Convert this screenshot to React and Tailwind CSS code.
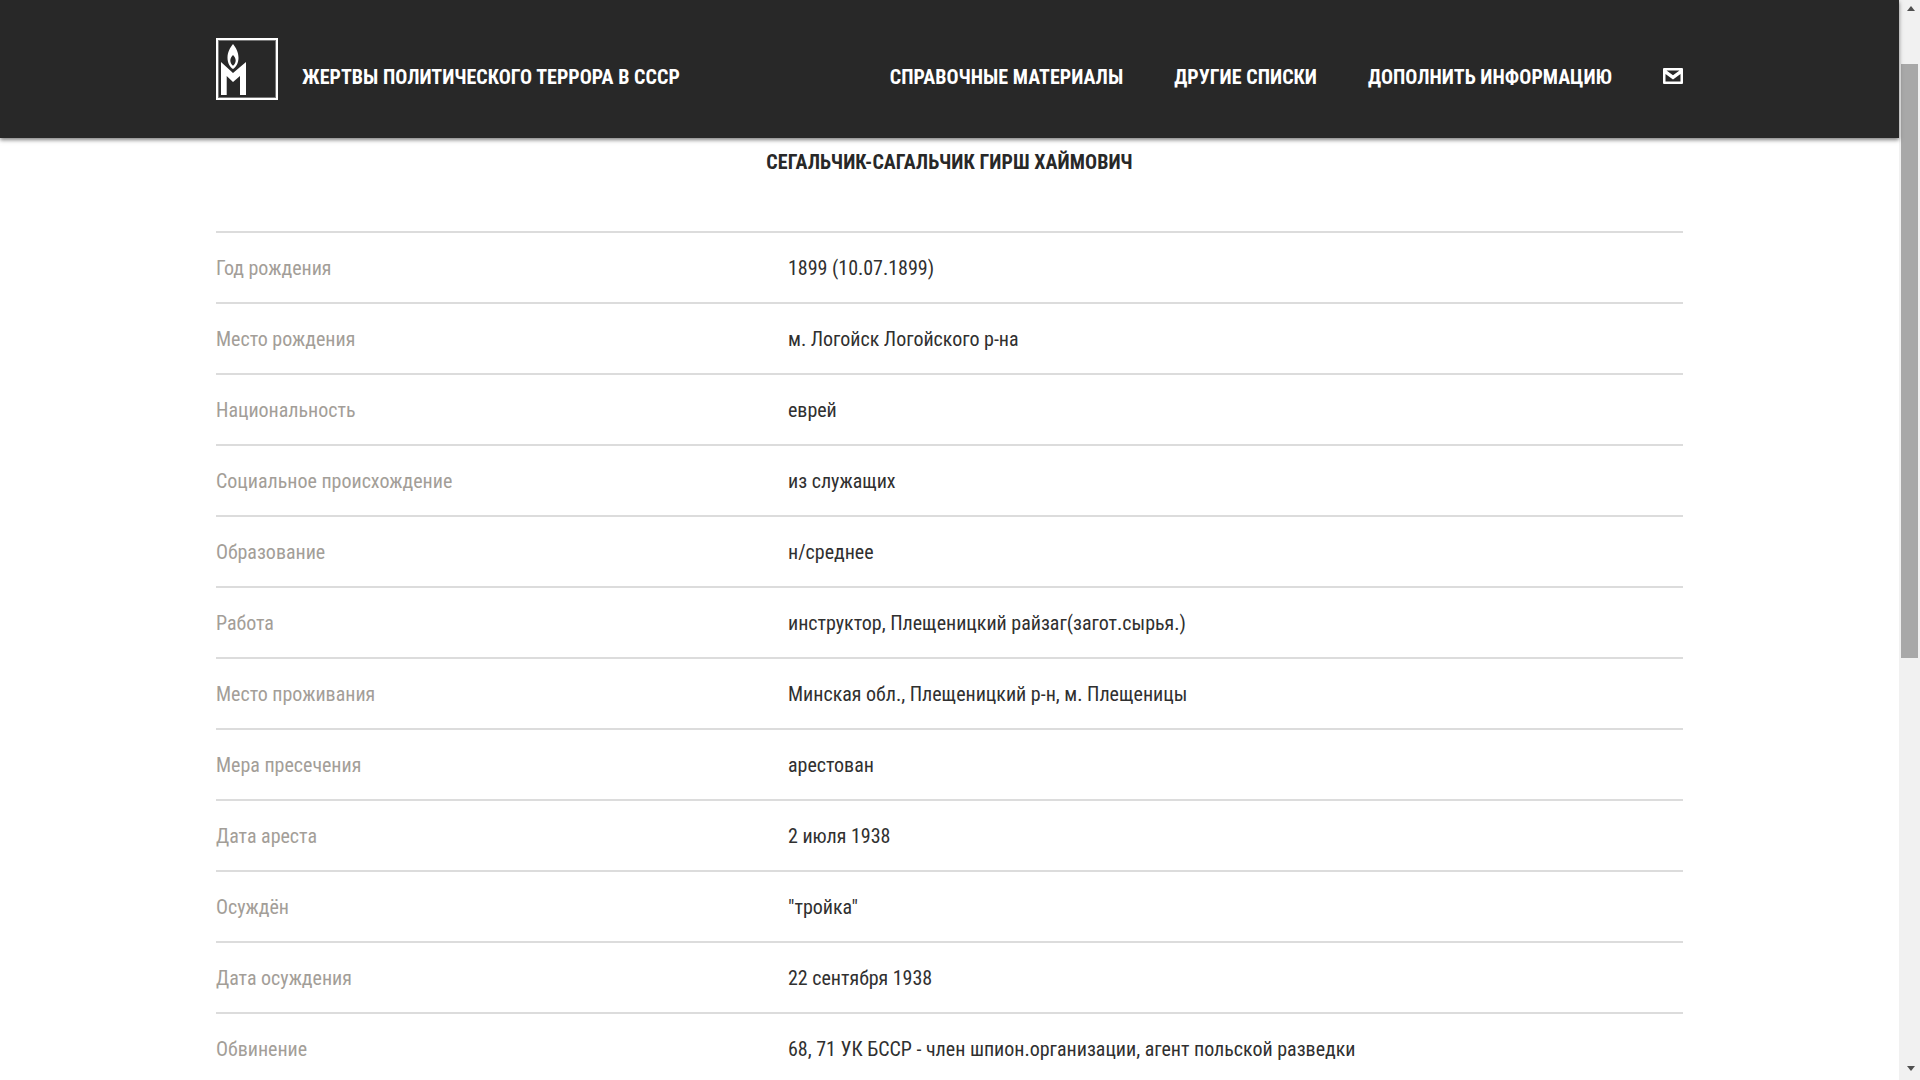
const rows = [
  ['Год рождения', '1899 (10.07.1899)'],
  ['Место рождения', 'м. Логойск Логойского р-на'],
  ['Национальность', 'еврей'],
  ['Социальное происхождение', 'из служащих'],
  ['Образование', 'н/среднее'],
  ['Работа', 'инструктор, Плещеницкий райзаг(загот.сырья.)'],
  ['Место проживания', 'Минская обл., Плещеницкий р-н, м. Плещеницы'],
  ['Мера пресечения', 'арестован'],
  ['Дата ареста', '2 июля 1938'],
  ['Осуждён', '"тройка"'],
  ['Дата осуждения', '22 сентября 1938'],
  ['Обвинение', '68, 71 УК БССР - член шпион.организации, агент польской разведки'],
];

const Logo = () => (
  <div className="w-[62px] h-[62px] border-2 border-white outline outline-1 -outline-offset-3 outline-[#777777] shrink-0">
    <svg viewBox="0 0 58 58" className="w-full h-full">
      <path fill="#fff" fillRule="evenodd" d="M15 4C18 8 20.500 12 20.500 18C20.500 23 18 27 15 29C12 27 9.500 23 9.500 18C9.500 12 12 8 15 4zM15 15C13.500 16.500 12.300 18.500 12.300 20.500C12.300 22.500 13.500 24.500 15 25.700C16.500 24.500 17.700 22.500 17.700 20.500C17.700 18.500 16.500 16.500 15 15z" />
      <path fill="#fff" d="M3 22L15 33L28 22V55H22V36L15 42L8.700 36V55H3z" />
    </svg>
  </div>
);

const Scrollbar = () => (
  <div className="w-[21px] shrink-0 bg-[#f1f1f1] flex flex-col items-end">
    <div className="h-[17px] w-[19px] flex items-center justify-center">
      <div className="w-0 h-0 border-x-[4.5px] border-x-transparent border-b-[5px] border-b-[#505050]"></div>
    </div>
    <div className="w-[17px] mr-[2px] h-[594px] mt-[47px] bg-[#a8a8a8]"></div>
    <div className="flex-1"></div>
    <div className="h-[17px] w-[19px] flex items-center justify-center mb-[3px]">
      <div className="w-0 h-0 border-x-[4.5px] border-x-transparent border-t-[5px] border-t-[#505050]"></div>
    </div>
  </div>
);

export default function App() {
  return (
    <div className="h-screen w-full flex overflow-hidden bg-white font-['Roboto',sans-serif] [font-stretch:75%]">
      <div className="flex-1 min-w-0 flex flex-col">
        <header className="h-[138px] shrink-0 bg-[#282828] shadow-[0_2px_4px_rgba(0,0,0,0.5)] px-[216px] relative z-10">
          <div className="flex items-center h-full pb-[1px]">
            <div className="self-start pt-[38px]">
              <Logo />
            </div>
            <a className="ml-[24px] mt-[16px] text-white font-bold text-[20px] tracking-[0.04px]">ЖЕРТВЫ ПОЛИТИЧЕСКОГО ТЕРРОРА В СССР</a>
            <nav className="ml-auto mt-[14px] flex items-center gap-[51px] text-white font-bold text-[20px] tracking-[0.03px]">
              <a className="pt-[2px]">СПРАВОЧНЫЕ МАТЕРИАЛЫ</a>
              <a className="pt-[2px]">ДРУГИЕ СПИСКИ</a>
              <a className="pt-[2px]">ДОПОЛНИТЬ ИНФОРМАЦИЮ</a>
              <svg viewBox="0 0 20 16" className="w-[20px] h-[16px]">
                <path fill="#fff" fillRule="evenodd" d="M1 0h18a1 1 0 0 1 1 1v14a1 1 0 0 1-1 1H1a1 1 0 0 1-1-1V1a1 1 0 0 1 1-1zM3.500 2.500L10 7.200L16.500 2.500zM2.500 6V13.500h15V6L10 11.500z" />
              </svg>
            </nav>
          </div>
        </header>
        <main className="px-[216px] flex-1 overflow-hidden">
          <h1 className="text-center text-[20px] font-bold text-[#282828] mt-[12px] leading-[24px] mb-[57px] tracking-[0.06px]">СЕГАЛЬЧИК-САГАЛЬЧИК ГИРШ ХАЙМОВИЧ</h1>
          <div className="border-t-2 border-[#dcdcdc]">
            {rows.map(([label, value]) => (
              <div key={label} className="flex items-center h-[71px] border-b-2 border-[#dcdcdc] text-[20px] tracking-[-0.015px]">
                <div className="w-[572px] shrink-0 text-[#a39e98]">{label}</div>
                <div className="text-[#303030]">{value}</div>
              </div>
            ))}
          </div>
        </main>
      </div>
      <Scrollbar />
    </div>
  );
}
